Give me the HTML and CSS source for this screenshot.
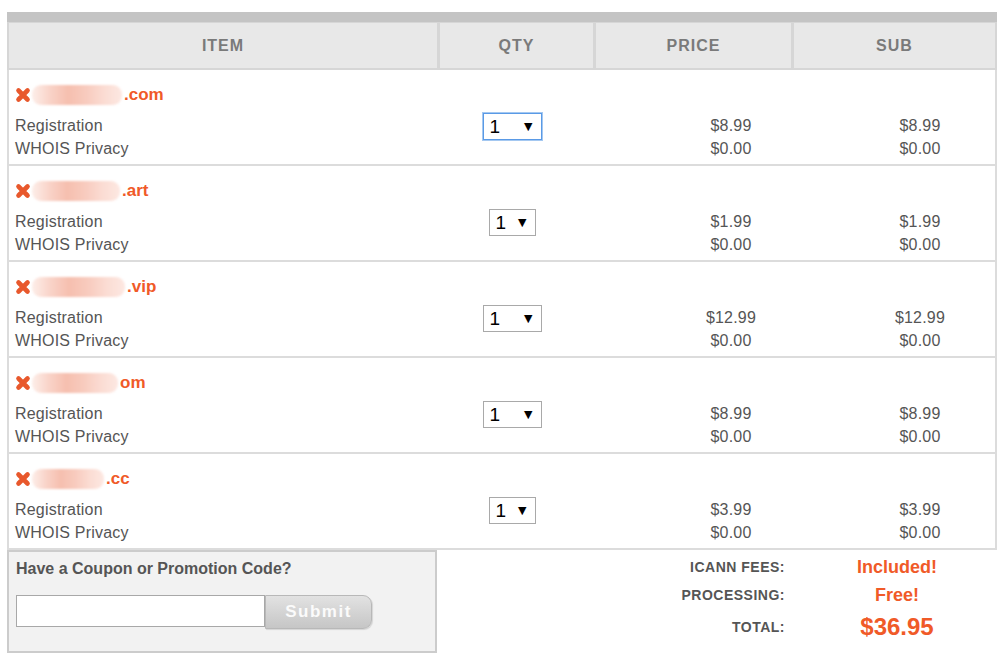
FILE: index.html
```html
<!DOCTYPE html>
<html>
<head>
<meta charset="utf-8">
<link rel="stylesheet" href="styles.css">
</head>
<body>
<div class="cart">
  <div class="topbar"></div>
  <div class="head">
    <div class="hcell">ITEM</div>
    <div class="hcell">QTY</div>
    <div class="hcell">PRICE</div>
    <div class="hcell">SUB</div>
  </div>

  <div class="row">
    <div class="domain">
      <svg class="x" viewBox="0 0 16 16"><path d="M3.5 3.5 L12.5 12.5 M12.5 3.5 L3.5 12.5"/></svg><span class="blur w90"></span><span class="tld">.com</span>
    </div>
    <div class="detail">
      <div class="item"><div>Registration</div><div>WHOIS Privacy</div></div>
      <div class="qty"><div class="sel wide focus"><span>1</span><span class="arr">▼</span></div></div>
      <div class="money"><div>$8.99</div><div>$0.00</div></div>
      <div class="money"><div>$8.99</div><div>$0.00</div></div>
    </div>
  </div>

  <div class="row">
    <div class="domain">
      <svg class="x" viewBox="0 0 16 16"><path d="M3.5 3.5 L12.5 12.5 M12.5 3.5 L3.5 12.5"/></svg><span class="blur w88"></span><span class="tld">.art</span>
    </div>
    <div class="detail">
      <div class="item"><div>Registration</div><div>WHOIS Privacy</div></div>
      <div class="qty"><div class="sel narrow"><span>1</span><span class="arr">▼</span></div></div>
      <div class="money"><div>$1.99</div><div>$0.00</div></div>
      <div class="money"><div>$1.99</div><div>$0.00</div></div>
    </div>
  </div>

  <div class="row">
    <div class="domain">
      <svg class="x" viewBox="0 0 16 16"><path d="M3.5 3.5 L12.5 12.5 M12.5 3.5 L3.5 12.5"/></svg><span class="blur w93"></span><span class="tld">.vip</span>
    </div>
    <div class="detail">
      <div class="item"><div>Registration</div><div>WHOIS Privacy</div></div>
      <div class="qty"><div class="sel wide"><span>1</span><span class="arr">▼</span></div></div>
      <div class="money"><div>$12.99</div><div>$0.00</div></div>
      <div class="money"><div>$12.99</div><div>$0.00</div></div>
    </div>
  </div>

  <div class="row">
    <div class="domain">
      <svg class="x" viewBox="0 0 16 16"><path d="M3.5 3.5 L12.5 12.5 M12.5 3.5 L3.5 12.5"/></svg><span class="blur w86"></span><span class="tld">om</span>
    </div>
    <div class="detail">
      <div class="item"><div>Registration</div><div>WHOIS Privacy</div></div>
      <div class="qty"><div class="sel wide"><span>1</span><span class="arr">▼</span></div></div>
      <div class="money"><div>$8.99</div><div>$0.00</div></div>
      <div class="money"><div>$8.99</div><div>$0.00</div></div>
    </div>
  </div>

  <div class="row">
    <div class="domain">
      <svg class="x" viewBox="0 0 16 16"><path d="M3.5 3.5 L12.5 12.5 M12.5 3.5 L3.5 12.5"/></svg><span class="blur w72"></span><span class="tld">.cc</span>
    </div>
    <div class="detail">
      <div class="item"><div>Registration</div><div>WHOIS Privacy</div></div>
      <div class="qty"><div class="sel narrow"><span>1</span><span class="arr">▼</span></div></div>
      <div class="money"><div>$3.99</div><div>$0.00</div></div>
      <div class="money"><div>$3.99</div><div>$0.00</div></div>
    </div>
  </div>

  <div class="bottom">
    <div class="coupon">
      <div class="ctitle">Have a Coupon or Promotion Code?</div>
      <div class="cform">
        <div class="cinput"></div>
        <div class="cbtn">Submit</div>
      </div>
    </div>
    <div class="totals">
      <div class="tl">ICANN FEES:</div><div class="tv">Included!</div>
      <div class="tl">PROCESSING:</div><div class="tv">Free!</div>
      <div class="tl">TOTAL:</div><div class="tv big">$36.95</div>
    </div>
  </div>
</div>
</body>
</html>
```

FILE: styles.css
```css
html, body {
  margin: 0;
  padding: 0;
  background: #fff;
}
body {
  font-family: "Liberation Sans", Arial, sans-serif;
  color: #555;
}
.cart {
  width: 990px;
  margin: 12px 0 0 7px;
}
.topbar {
  height: 10px;
  background: #c4c4c4;
}
.head {
  display: grid;
  grid-template-columns: 428px 153px 195px 201px;
  column-gap: 3px;
  padding: 1px 2px 2px 2px;
  background: #d6d6d6;
}
.hcell {
  background: #e8e8e8;
  height: 45px;
  line-height: 45px;
  text-align: center;
  font-weight: bold;
  font-size: 16px;
  letter-spacing: 1px;
  color: #7a7a7a;
}
.row {
  border-left: 2px solid #dcdcdc;
  border-right: 2px solid #dcdcdc;
  border-bottom: 2px solid #dcdcdc;
  padding: 14px 0 4px 0;
}
.domain {
  height: 22px;
  display: flex;
  align-items: center;
  padding-left: 6px;
  margin-bottom: 8px;
}
.x {
  width: 16px;
  height: 16px;
  flex: none;
}
.x path {
  stroke: #e8582c;
  stroke-width: 4.6;
  stroke-linecap: round;
  fill: none;
}
.blur {
  display: inline-block;
  height: 20px;
  margin-left: 1px;
  margin-right: 2px;
  border-radius: 9px;
  background: linear-gradient(90deg, #fdeee9 0%, #f9d3c8 20%, #f6bfaf 40%, #f8cbbe 60%, #fbdcd3 80%, #fde8e2 100%);
  filter: blur(1px);
}
.w90 { width: 90px; }
.w88 { width: 88px; }
.w93 { width: 93px; }
.w86 { width: 86px; }
.w72 { width: 72px; }
.tld {
  font-size: 17px;
  font-weight: bold;
  color: #f05a28;
}
.detail {
  display: grid;
  grid-template-columns: 427px 152px 286px 92px;
  font-size: 16px;
  line-height: 23px;
  letter-spacing: 0.2px;
}
.item {
  padding-left: 6px;
}
.money {
  text-align: center;
}
.qty {
  display: flex;
  justify-content: center;
  align-items: flex-start;
}
.sel {
  margin-top: -1px;
  height: 27px;
  box-sizing: border-box;
  border: 1px solid #a9a9a9;
  background: #fff;
  display: flex;
  align-items: center;
  justify-content: space-between;
  padding: 0 8px 0 6px;
  color: #000;
  font-size: 19px;
  letter-spacing: 0;
}
.sel.wide { width: 59px; }
.sel.narrow { width: 47px; }
.sel.focus {
  border: 1px solid #5a9ae6;
  box-shadow: 0 0 0 1px rgba(90, 154, 230, 0.55);
}
.arr {
  font-family: "DejaVu Sans", sans-serif;
  font-size: 11px;
}
.bottom {
  display: flex;
  align-items: flex-start;
}
.coupon {
  width: 430px;
  height: 103px;
  box-sizing: border-box;
  border: 2px solid #cccccc;
  background: #f2f2f2;
  padding: 7px 0 0 7px;
}
.ctitle {
  font-size: 16px;
  font-weight: bold;
  line-height: 20px;
  color: #555;
}
.cform {
  display: flex;
  align-items: flex-start;
  margin-top: 16px;
}
.cinput {
  width: 249px;
  height: 32px;
  box-sizing: border-box;
  border: 1px solid #a8a8a8;
  background: #fff;
}
.cbtn {
  width: 107px;
  height: 34px;
  box-sizing: border-box;
  border: 1px solid #b8b8b8;
  border-radius: 0 9px 9px 0;
  background: linear-gradient(#e2e2e2, #c6c6c6);
  color: #fbfbfb;
  font-size: 17px;
  font-weight: bold;
  letter-spacing: 1.5px;
  text-align: center;
  line-height: 31px;
  box-shadow: 1px 1px 1px rgba(0, 0, 0, 0.12);
}
.totals {
  display: grid;
  grid-template-columns: 348px 174px;
  grid-template-rows: 28px 28px 36px;
  column-gap: 25px;
  padding-top: 3px;
}
.tl {
  font-size: 14px;
  font-weight: bold;
  letter-spacing: 0.5px;
  color: #555;
  display: flex;
  align-items: center;
  justify-content: flex-end;
}
.tv {
  font-size: 18px;
  font-weight: bold;
  color: #f05a28;
  display: flex;
  align-items: center;
  justify-content: center;
}
.tv.big {
  font-size: 24px;
}
```
